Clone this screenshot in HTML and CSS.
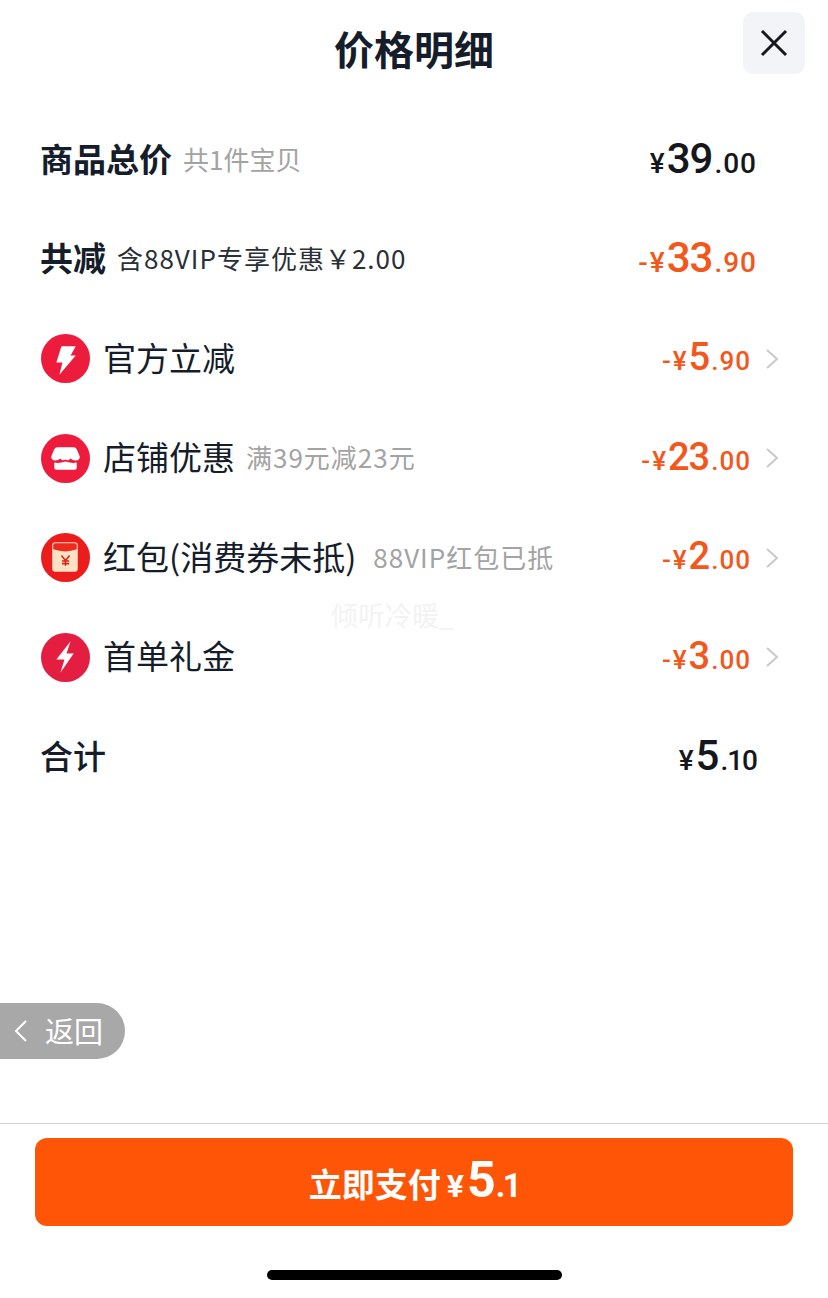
FILE: index.html
```html
<!DOCTYPE html>
<html>
<head>
    <title>价格明细</title>
    <link rel="stylesheet" href="styles.css">
</head>
<body>
    <div class="page">
        <header class="header">
            <h1 class="title">价格明细</h1>
            <button class="close-btn">
                <svg width="30" height="30" viewBox="0 0 30 30"><path d="M3 3L27 27M27 3L3 27" stroke="#14181f" stroke-width="3" fill="none"/></svg>
            </button>
        </header>

        <div class="rows">
            <div class="row">
                <span class="label bold">商品总价</span>
                <span class="note grey tight">共1件宝贝</span>
                <span class="price"><span class="cur">¥</span><span class="big">39</span><span class="small">.00</span></span>
            </div>
            <div class="row">
                <span class="label bold">共减</span>
                <span class="note dark">含88VIP专享优惠￥2.00</span>
                <span class="price orange"><span class="cur">-¥</span><span class="big">33</span><span class="small">.90</span></span>
            </div>
            <div class="row">
                <svg class="icon" viewBox="0 0 48 48"><circle cx="24" cy="24" r="24" fill="#ee1c3c"/><path d="M20 12H34L29 21H34L18 40L21 28H15Z" fill="#fff"/></svg>
                <span class="label">官方立减</span>
                <span class="price orange sub"><span class="cur">-¥</span><span class="big">5</span><span class="small">.90</span></span>
                <svg class="chevron" viewBox="0 0 14 22"><path d="M2 2L12 11L2 20" stroke="#c9c9c9" stroke-width="2" fill="none"/></svg>
            </div>
            <div class="row">
                <svg class="icon" viewBox="0 0 48 48"><circle cx="24" cy="24" r="24" fill="#ee1c3c"/><path d="M16 13H32Q34 13 35 15L38 22Q38 26 34 26Q31 26 29 24Q26 27 24 25Q21 27 19 24Q17 26 14 26Q10 26 10 22L13 15Q14 13 16 13Z" fill="#fff"/><path d="M13 28Q18 29 24 27Q30 29 35 28V33Q35 35 33 35H15Q13 35 13 33Z" fill="#fff"/></svg>
                <span class="label">店铺优惠</span>
                <span class="note grey">满39元减23元</span>
                <span class="price orange sub"><span class="cur">-¥</span><span class="big">23</span><span class="small">.00</span></span>
                <svg class="chevron" viewBox="0 0 14 22"><path d="M2 2L12 11L2 20" stroke="#c9c9c9" stroke-width="2" fill="none"/></svg>
            </div>
            <div class="row">
                <svg class="icon" viewBox="0 0 48 48"><circle cx="24" cy="24" r="24" fill="#ec1c1c"/><rect x="11" y="9" width="25" height="29" rx="3" fill="#fde3c4"/><path d="M12 12Q12 10 14 10H33Q35 10 35 12V16Q24 20 12 16Z" fill="#ee2a1e"/><path d="M20 22L24 27L28 22M24 27V32M20.5 27.5H27.5M20.5 30H27.5" stroke="#d8261c" stroke-width="1.5" fill="none"/></svg>
                <span class="label">红包(消费券未抵)</span>
                <span class="note grey wide">88VIP红包已抵</span>
                <span class="price orange sub"><span class="cur">-¥</span><span class="big">2</span><span class="small">.00</span></span>
                <svg class="chevron" viewBox="0 0 14 22"><path d="M2 2L12 11L2 20" stroke="#c9c9c9" stroke-width="2" fill="none"/></svg>
            </div>
            <div class="row">
                <svg class="icon" viewBox="0 0 48 48"><circle cx="24" cy="24" r="24" fill="#e41e40"/><path d="M29 8L15 26H23L19 39L32 20H25Z" fill="#fff"/></svg>
                <span class="label">首单礼金</span>
                <span class="price orange sub"><span class="cur">-¥</span><span class="big">3</span><span class="small">.00</span></span>
                <svg class="chevron" viewBox="0 0 14 22"><path d="M2 2L12 11L2 20" stroke="#c9c9c9" stroke-width="2" fill="none"/></svg>
            </div>
            <div class="row">
                <span class="label medium">合计</span>
                <span class="price"><span class="cur">¥</span><span class="big">5</span><span class="small narrow">.10</span></span>
            </div>
        </div>

        <div class="footer">
            <button class="pay-btn">立即支付<span class="pay-cur">¥</span><span class="pay-big">5</span><span class="pay-small">.1</span></button>
            <div class="home-bar"></div>
        </div>

        <div class="watermark">倾听冷暖_</div>
        <div class="back-pill">
            <svg width="14" height="24" viewBox="0 0 14 24"><path d="M12 2L2 12L12 22" stroke="#fff" stroke-width="2" fill="none"/></svg>
            <span class="back-text">返回</span>
        </div>
    </div>
</body>
</html>
```

FILE: styles.css
```css
* {
    box-sizing: border-box;
}

body {
    margin: 0;
    background: #fff;
    color: #151c2a;
    font-family: "Noto Sans CJK SC", "Noto Sans", sans-serif;
}

.page {
    position: relative;
    height: 1298px;
    display: flex;
    flex-direction: column;
    overflow: hidden;
}

.header {
    height: 110px;
    padding: 12px 23px 0 0;
    display: flex;
    justify-content: flex-end;
    align-items: flex-start;
    position: relative;
}

.title {
    position: absolute;
    left: 0;
    right: 0;
    top: 24px;
    margin: 0;
    text-align: center;
    font-size: 40px;
    line-height: 48px;
    font-weight: 700;
}

.close-btn {
    width: 62px;
    height: 62px;
    padding: 0;
    border: none;
    border-radius: 10px;
    background: #f3f4f7;
    display: flex;
    align-items: center;
    justify-content: center;
}

.rows {
    flex: 1;
    padding: 0 71px 0 40px;
}

.row {
    height: 99.5px;
    display: flex;
    align-items: center;
}

.icon {
    width: 49px;
    height: 49px;
    margin: 0 13px 0 1px;
    flex-shrink: 0;
}

.label {
    font-size: 33px;
    margin-bottom: 4px;
    white-space: nowrap;
}

.label.bold {
    font-weight: 700;
}

.label.medium {
    font-weight: 500;
}

.note {
    margin: 0 0 3px 11px;
    font-size: 26px;
    letter-spacing: 1px;
    white-space: nowrap;
}

.note.tight {
    letter-spacing: 0;
}

.note.wide {
    margin-left: 17px;
}

.note.grey {
    color: #a3a3a3;
}

.note.dark {
    color: #2a2f38;
}

.price {
    margin: 0 0 3px auto;
    display: flex;
    align-items: baseline;
    font-family: Roboto, sans-serif;
    font-weight: 500;
    color: #15171c;
    white-space: nowrap;
}

.price.orange {
    color: #f2571c;
}

.cur {
    font-size: 28px;
    letter-spacing: 2px;
}

.big {
    font-size: 42px;
    letter-spacing: -1px;
}

.small {
    font-size: 28px;
    letter-spacing: 1px;
    margin-left: 2px;
}

.small.narrow {
    letter-spacing: -1px;
}

.sub .cur {
    font-size: 26px;
}

.sub .big {
    font-size: 38px;
}

.sub .small {
    font-size: 26px;
}

.chevron {
    width: 14px;
    height: 22px;
    flex-shrink: 0;
    margin: 0 -22px 0 14px;
}

.footer {
    height: 175px;
    border-top: 1px solid #d4d4d4;
    padding: 14px 35px 0;
    display: flex;
    flex-direction: column;
    align-items: center;
}

.pay-btn {
    width: 100%;
    height: 88px;
    border: none;
    border-radius: 12px;
    background: #fe5507;
    color: #fff;
    font-family: "Noto Sans CJK SC", sans-serif;
    font-size: 33px;
    font-weight: 700;
    display: flex;
    justify-content: center;
    align-items: baseline;
    padding-top: 13px;
}

.pay-cur {
    font-family: Roboto, sans-serif;
    font-size: 32px;
    margin-left: 6px;
}

.pay-big {
    font-family: Roboto, sans-serif;
    font-size: 50px;
    margin-left: 3px;
}

.pay-small {
    font-family: Roboto, sans-serif;
    font-size: 33px;
    letter-spacing: -2.5px;
}

.home-bar {
    width: 295px;
    height: 10px;
    margin-top: 44px;
    border-radius: 5px;
    background: #000;
}

.watermark {
    position: absolute;
    left: 331px;
    top: 597px;
    font-size: 27px;
    line-height: 36px;
    color: #f3f3f3;
}

.back-pill {
    position: absolute;
    left: 0;
    top: 1003px;
    width: 125px;
    height: 56px;
    padding-left: 14px;
    border-radius: 0 28px 28px 0;
    background: #a8a8a8;
    color: #fff;
    font-size: 29px;
    display: flex;
    align-items: center;
    gap: 17px;
}

.back-text {
    margin-bottom: 2px;
}
```
